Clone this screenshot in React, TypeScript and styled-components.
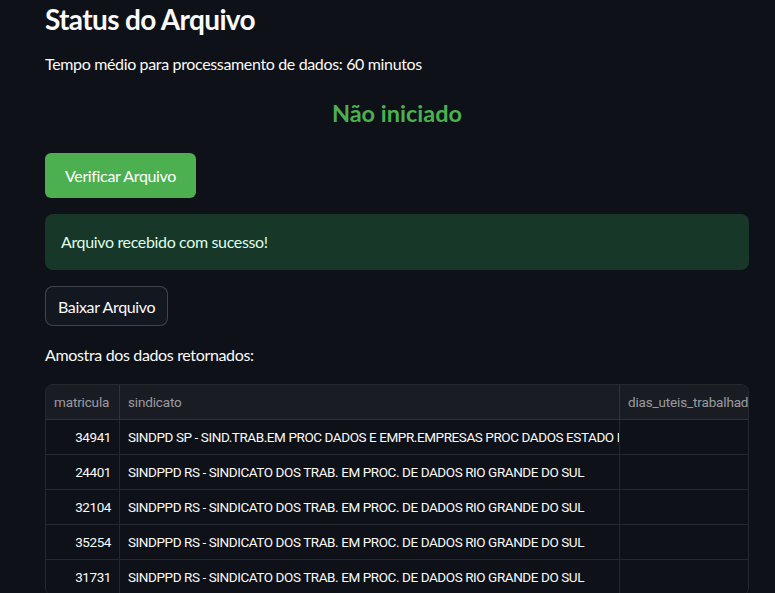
import React from "react";
import styled, { createGlobalStyle } from "styled-components";

const Global = createGlobalStyle`
  html, body { margin: 0; padding: 0; background: #0e1117; }
  body { font-family: Lato, "Liberation Sans", sans-serif; color: #fafafa; overflow: hidden; }
`;

const Page = styled.main`
  width: 775px;
  height: 593px;
  overflow: hidden;
  background: #0e1117;
  box-sizing: border-box;
  padding: 2px 26px 0 45px;
  letter-spacing: -0.35px;
`;

const Column = styled.div`
  width: 704px;
  display: flex;
  flex-direction: column;
  gap: 16px;
`;

const Title = styled.h2`
  margin: 0;
  font-size: 28px;
  line-height: 34px;
  font-weight: 700;
  letter-spacing: -0.65px;
  color: #fafafa;
`;

const Text = styled.p<{ $mt?: number }>`
  margin: ${(p) => p.$mt ?? 0}px 0 0;
  font-size: 16px;
  line-height: 24px;
  color: #fafafa;
`;

const Status = styled.h3`
  margin: 8px 0 0;
  text-align: center;
  font-size: 23.5px;
  line-height: 27px;
  font-weight: 700;
  letter-spacing: 0;
  color: #4caf50;
`;

const PrimaryButton = styled.button`
  align-self: flex-start;
  margin-top: 10px;
  height: 45px;
  padding: 0 20px;
  border: none;
  border-radius: 6px;
  background: #4caf50;
  color: #ffffff;
  font-family: inherit;
  font-size: 16px;
  letter-spacing: inherit;
`;

const Alert = styled.div`
  box-sizing: border-box;
  height: 56px;
  padding: 16px;
  border-radius: 8px;
  background: #173828;
  color: rgb(223, 253, 233);
  font-size: 16px;
  line-height: 24px;
`;

const SecondaryButton = styled.button`
  align-self: flex-start;
  height: 40px;
  padding: 0 12px;
  border: 1px solid rgba(250, 250, 250, 0.2);
  border-radius: 8px;
  background: rgb(19, 23, 32);
  color: #fafafa;
  font-family: inherit;
  font-size: 16px;
  letter-spacing: inherit;
`;

const TableFrame = styled.div`
  margin-top: 1px;
  width: 702px;
  border: 1px solid rgba(250, 250, 250, 0.1);
  border-radius: 8px;
  overflow: hidden;
`;

const Grid = styled.div`
  display: grid;
  grid-template-columns: 74px 500px 200px;
  width: 774px;
  font-family: Roboto, "Liberation Sans", sans-serif;
  letter-spacing: -0.42px;
`;

const Cell = styled.div<{ $head?: boolean; $num?: boolean }>`
  box-sizing: border-box;
  height: 35px;
  padding: 0 8px;
  display: flex;
  align-items: center;
  justify-content: ${(p) => (p.$num ? "flex-end" : "flex-start")};
  background: ${(p) => (p.$head ? "#1a1c24" : "#0e1117")};
  color: ${(p) => (p.$head ? "rgba(250,250,250,0.58)" : "#fafafa")};
  font-size: 13.5px;
  letter-spacing: ${(p) => (p.$head ? "-0.15px" : "inherit")};
  white-space: nowrap;
  overflow: hidden;
  border-right: 1px solid rgba(250, 250, 250, 0.1);
  border-bottom: 1px solid rgba(250, 250, 250, 0.1);
`;

const rows = [
  ["34941", "SINDPD SP - SIND.TRAB.EM PROC DADOS E EMPR.EMPRESAS PROC DADOS ESTADO DE SAO PAULO."],
  ["24401", "SINDPPD RS - SINDICATO DOS TRAB. EM PROC. DE DADOS RIO GRANDE DO SUL"],
  ["32104", "SINDPPD RS - SINDICATO DOS TRAB. EM PROC. DE DADOS RIO GRANDE DO SUL"],
  ["35254", "SINDPPD RS - SINDICATO DOS TRAB. EM PROC. DE DADOS RIO GRANDE DO SUL"],
  ["31731", "SINDPPD RS - SINDICATO DOS TRAB. EM PROC. DE DADOS RIO GRANDE DO SUL"],
];

export default function App() {
  return (
    <>
      <Global />
      <Page>
        <Column>
          <Title>Status do Arquivo</Title>
          <Text>Tempo médio para processamento de dados: 60 minutos</Text>
          <Status>Não iniciado</Status>
          <PrimaryButton>Verificar Arquivo</PrimaryButton>
          <Alert>Arquivo recebido com sucesso!</Alert>
          <SecondaryButton>Baixar Arquivo</SecondaryButton>
          <Text $mt={1}>Amostra dos dados retornados:</Text>
          <TableFrame>
            <Grid>
              <Cell $head>matricula</Cell>
              <Cell $head>sindicato</Cell>
              <Cell $head>dias_uteis_trabalhados</Cell>
              {rows.map(([m, s]) => (
                <React.Fragment key={m}>
                  <Cell $num>{m}</Cell>
                  <Cell>{s}</Cell>
                  <Cell />
                </React.Fragment>
              ))}
            </Grid>
          </TableFrame>
        </Column>
      </Page>
    </>
  );
}
